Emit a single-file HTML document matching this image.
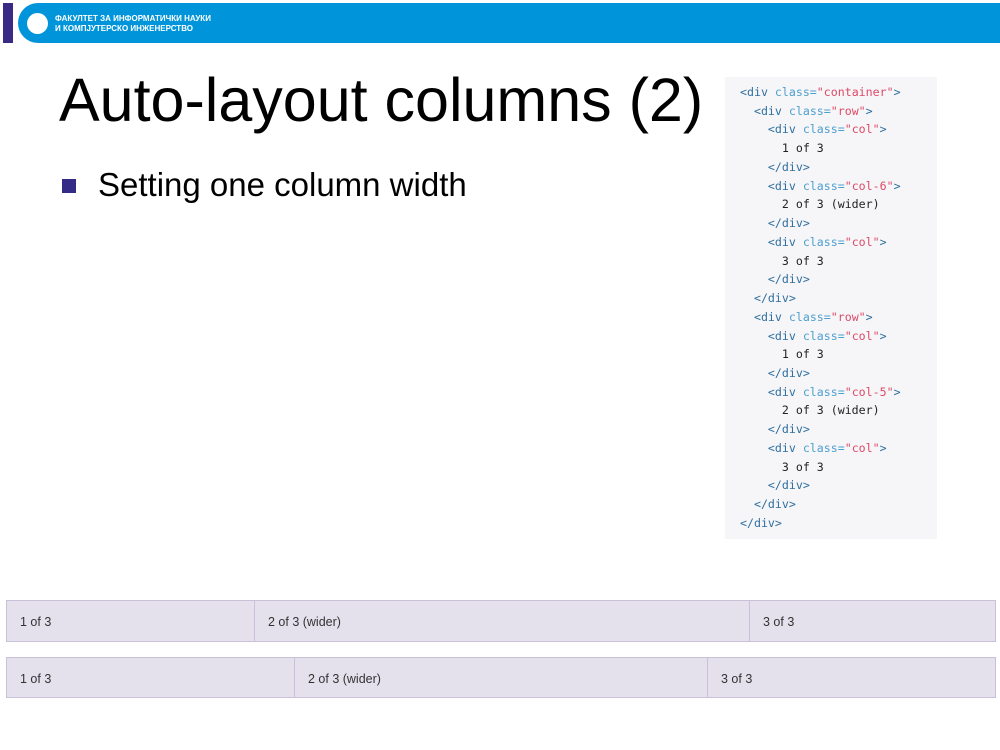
<!DOCTYPE html><html><head><meta charset="utf-8"><style>
body{margin:0;width:1000px;height:750px;background:#fff;position:relative;overflow:hidden;font-family:"Liberation Sans",sans-serif}
.a{position:absolute}
pre{margin:0;font-family:"DejaVu Sans Mono","Liberation Mono",monospace;font-size:11.6px;line-height:18.74px;color:#222}
.t{color:#2f6f9f}.at{color:#4f9fcf}.s{color:#dd4a68}
.row{position:absolute;left:6px;width:990px;height:41px;display:flex}
.row div{background:#e5e1ec;border:1px solid #c9c1d9;box-sizing:border-box;font-size:12.5px;color:#333;padding:14px 0 0 13px;margin-right:-1px}
</style></head><body>
<div class="a" style="left:3px;top:3px;width:10px;height:40px;background:#3a2a86"></div>
<div class="a" style="left:18px;top:3px;width:982px;height:40px;background:#0095da;border-radius:20px 0 0 20px"></div>
<div class="a" style="left:27px;top:13px;width:21px;height:21px;border-radius:50%;background:#fff"></div>
<div class="a" style="left:55px;top:14px;color:#fff;font-size:8px;font-weight:bold;line-height:10px">ФАКУЛТЕТ ЗА ИНФОРМАТИЧКИ НАУКИ<br>И КОМПЈУТЕРСКО ИНЖЕНЕРСТВО</div>
<div class="a" style="left:59px;top:65px;font-size:61px;color:#000;white-space:nowrap">Auto-layout columns (2)</div>
<div class="a" style="left:62px;top:179px;width:14px;height:14px;background:#332b85"></div>
<div class="a" style="left:98px;top:166px;font-size:33px;color:#000;white-space:nowrap">Setting one column width</div>
<div class="a" style="left:725px;top:77px;width:212px;height:462px;background:#f6f6f8"></div>
<pre class="a" style="left:740px;top:83px"><span class="t">&lt;div</span> <span class="at">class=</span><span class="s">"container"</span><span class="t">&gt;</span>
  <span class="t">&lt;div</span> <span class="at">class=</span><span class="s">"row"</span><span class="t">&gt;</span>
    <span class="t">&lt;div</span> <span class="at">class=</span><span class="s">"col"</span><span class="t">&gt;</span>
      1 of 3
    <span class="t">&lt;/div&gt;</span>
    <span class="t">&lt;div</span> <span class="at">class=</span><span class="s">"col-6"</span><span class="t">&gt;</span>
      2 of 3 (wider)
    <span class="t">&lt;/div&gt;</span>
    <span class="t">&lt;div</span> <span class="at">class=</span><span class="s">"col"</span><span class="t">&gt;</span>
      3 of 3
    <span class="t">&lt;/div&gt;</span>
  <span class="t">&lt;/div&gt;</span>
  <span class="t">&lt;div</span> <span class="at">class=</span><span class="s">"row"</span><span class="t">&gt;</span>
    <span class="t">&lt;div</span> <span class="at">class=</span><span class="s">"col"</span><span class="t">&gt;</span>
      1 of 3
    <span class="t">&lt;/div&gt;</span>
    <span class="t">&lt;div</span> <span class="at">class=</span><span class="s">"col-5"</span><span class="t">&gt;</span>
      2 of 3 (wider)
    <span class="t">&lt;/div&gt;</span>
    <span class="t">&lt;div</span> <span class="at">class=</span><span class="s">"col"</span><span class="t">&gt;</span>
      3 of 3
    <span class="t">&lt;/div&gt;</span>
  <span class="t">&lt;/div&gt;</span>
<span class="t">&lt;/div&gt;</span></pre>
<div class="row" style="top:600px;height:42px"><div style="width:249px">1 of 3</div><div style="width:496px">2 of 3 (wider)</div><div style="width:247px">3 of 3</div></div>
<div class="row" style="top:657px"><div style="width:289px">1 of 3</div><div style="width:414px">2 of 3 (wider)</div><div style="width:289px">3 of 3</div></div>
</body></html>
